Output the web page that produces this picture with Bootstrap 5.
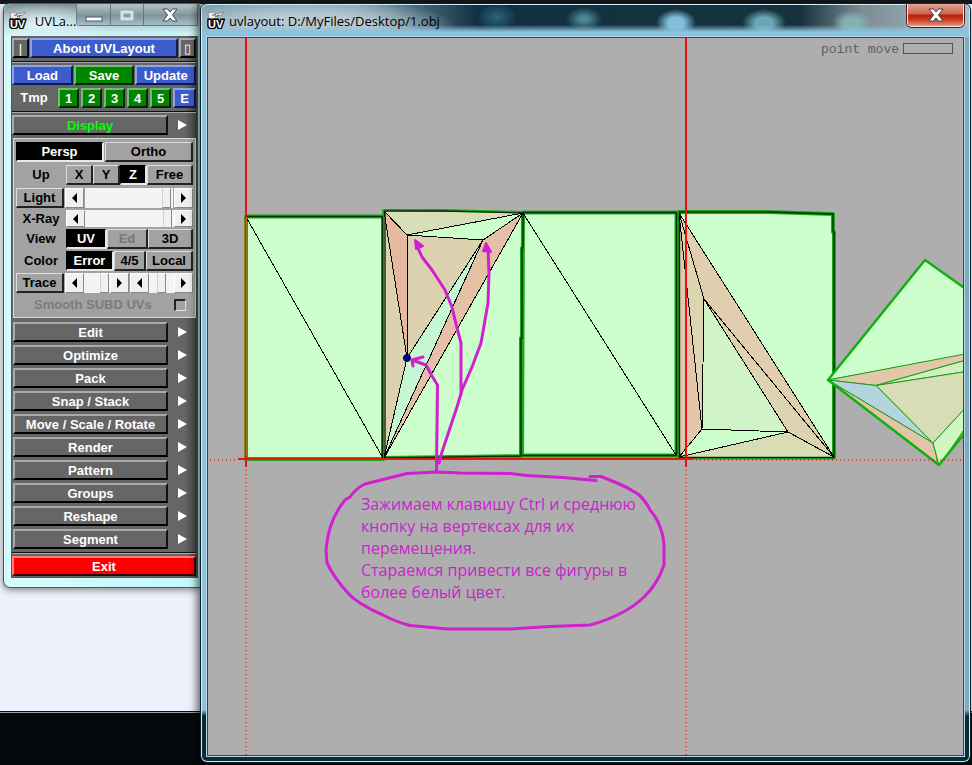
<!DOCTYPE html>
<html lang="ru">
<head>
<meta charset="utf-8">
<meta name="viewport" content="width=device-width, initial-scale=1">
<title>uvlayout: D:/MyFiles/Desktop/1.obj</title>
<link href="https://cdn.jsdelivr.net/npm/bootstrap@5.3.0/dist/css/bootstrap.min.css" rel="stylesheet">
<style>
body{font-family:"Liberation Sans",Arial,sans-serif;font-size:13px;line-height:16px}
.desktop{padding:3px 1px 2px 3px;background:linear-gradient(#151b1d 0 4px,#eef1fb 4px calc(100% - 54px),#0a0d0f calc(100% - 54px) calc(100% - 53px),#9a9fa3 calc(100% - 53px) calc(100% - 52px),#04090c calc(100% - 52px))}
.win{border:1px solid #445c62;border-radius:7px}
.win-title{font-family:"Open Sans","Noto Sans",sans-serif;font-size:13px;line-height:20px;color:#000}
/* tools window */
.tools{width:197px;border-radius:7px 0 0 7px;border-right:0;padding:0 2px 9px 7px;background:linear-gradient(90deg,#bdf6f6,#d6fcfd 4px,#c2f8fa 100%);box-shadow:inset 1px 1px 0 #e9ffff,0 2px 7px #0007}
.tools .win-title{height:32px;padding-top:7px;margin:0 -2px 0 -7px;padding-left:5px;border-radius:7px 0 0 0;background:radial-gradient(ellipse 60px 20px at 40px 20px,#e2f5f8,#e2f5f800),linear-gradient(#7f9297,#a5bdc4 50%,#c9f3f7 92%)}
.caps{height:22px;margin:-7px 2px 0 0;border:1px solid #667c83;border-top:0;border-radius:0 0 0 4px;overflow:hidden}
.caps button{width:33px;border:0;border-right:1px solid #66797f;background:linear-gradient(#b4c3c8,#8b9ca2 48%,#7d9299 52%,#a5bfc6);padding:0}
.caps button:first-child{width:34px}.caps button:last-child{width:54px;border-right:0}
.tool-body{background:linear-gradient(90deg,#666 93%,#454545);border:1px solid #555;border-width:0 1px 1px;padding:2px 1px 1px 0}
.bv{height:20px;padding:0;border:2px solid;border-color:#aaa #111 #000 #aaa;background:#666;color:#fff;font-weight:700;line-height:15px;text-align:center;white-space:nowrap;flex:none}
.blue{background:#3d5ccb;border-color:#8ea2e8 #0d1a55 #0d1a55 #8ea2e8}
.green{background:#008500;border-color:#73bd73 #002a00 #002a00 #73bd73}
.red{background:#f00;border-color:#ff7d7d #300 #300 #ff7d7d}
.rule{height:2px;background:#111;border-bottom:1px solid #aaa;margin:3px 0 2px}
.g3{gap:3px}.g1{gap:1px}.g2{gap:2px}
.w16{width:17px}.w21{width:21px}.w27{width:27px}.w32{width:32px}.w41{width:41px}.w48{width:48px}
.lab{width:44px;font-weight:700;color:#fff;text-align:center;flex:none}
.grow{flex:1 1 0;min-width:0}
.tri{width:28px;height:20px;border:0;background:none;padding:0;line-height:0;flex:none}
.sub{background:#a2a2a2;border:1px solid #dadada;margin:3px 0 4px 1px;padding:3px 2px 3px 2px;color:#000}
.sub .lab{width:50px;color:#000}
.sub .bv{background:#a2a2a2;color:#000;border-width:1px 2px 2px 1px;border-color:#ddd #222 #222 #ddd;line-height:16px}
.sub .bv.on{background:#000;color:#fff;border-color:#000 #e8e8e8 #e8e8e8 #000}
.sub .bv.off{color:#777}
.sub .arr{width:19px;height:20px;flex:none;padding:0;background:#f0f0f0;border:1px solid;border-color:#fff #888 #888 #fff;line-height:0}
.sub .short .arr,.short .sl{height:17px}
.sl{-webkit-appearance:none;appearance:none;height:20px;margin:0;min-width:0;background:#f4f4f4;flex:1 1 0;overflow:hidden}
.sl::-webkit-slider-thumb{-webkit-appearance:none;width:9px;height:20px;background:#f0f0f0;border:1px solid;border-color:#fff #888 #888 #d0d0d0}
.chk{-webkit-appearance:none;appearance:none;width:12px;height:12px;margin:0;border:2px solid;border-color:#222 #ddd #ddd #222;border-width:2px 1px 1px 2px}
.dim{color:#7b7b7b;font-weight:700}
.disp{color:#0f0}
.row-up{margin-top:3px}.row-2{margin-top:2px}.ms-px{margin-left:1px}
.smooth{height:19px;margin-top:2px;padding:0 7px 0 18px}
.menu-list{padding-left:1px}
/* drawing window */
.view{border-color:#0d2028;background:
 linear-gradient(#0000 calc(100% - 52px),#0e2a36 calc(100% - 46px)),
 linear-gradient(90deg,#8cc3de,#85b6cf 60%,#7cabc2);
 box-shadow:inset 0 0 0 1px #d2edf5,-3px 0 9px #0009;padding:0 6px 6px}
.view>.win-title{height:32px;margin:1px -5px 0;padding:6px 0 0 5px;border-radius:6px 6px 0 0;background:
 linear-gradient(#0000 62%,#8cc2dd 84%),
 radial-gradient(ellipse 150px 26px at 105px 20px,#b9c9d1 40%,#b9c9d100),
 radial-gradient(ellipse 20px 14px at 295px 12px,#2a6480,#2a648000),
 radial-gradient(ellipse 18px 12px at 382px 14px,#4c8795 20%,#4c879500),
 radial-gradient(ellipse 20px 14px at 474px 18px,#7fc0db 40%,#7fc0db00),
 radial-gradient(ellipse 22px 14px at 562px 18px,#66a6b5 40%,#66a6b500),
 radial-gradient(ellipse 20px 13px at 650px 18px,#82b0b0 40%,#82b0b000),
 linear-gradient(90deg,#7ba0b0 20%,#123041 36%,#16323e 78%,#7d8b93 86%,#a3c2cf)}
.x-red{width:57px;height:23px;margin:-7px 5px 0 0;padding:0;border:1px solid #fbe4df;border-top:0;border-radius:0 0 5px 5px;background:linear-gradient(#e3a194,#cf6650 45%,#b4220b 50%,#c63a20 70%,#e8967c);box-shadow:0 0 0 1px #4b1f1c;line-height:0}
.canvas-area{background:#aeaeae;border:1px solid #33474f;box-shadow:0 0 0 1px #b9d7e2;min-height:600px}
.scene{position:absolute;inset:0;width:100%;height:100%}
.status{position:relative;padding:5px 10px 0 0;font:13px/14px "Liberation Mono",monospace;color:#606060}
.meter{width:50px;height:11px;border:1px solid #555}
.note{position:absolute;left:153px;top:455px;width:290px;font:16px/22px "Open Sans","Noto Sans",sans-serif;color:#d020d0}
</style>
<script src="https://cdn.jsdelivr.net/npm/bootstrap@5.3.0/dist/js/bootstrap.bundle.min.js"></script>
</head>
<body>
<svg class="d-none" aria-hidden="true">
 <symbol id="r" viewBox="0 0 9 10"><path d="M0 0L9 5L0 10z" fill="#fff"/></symbol>
 <symbol id="rb" viewBox="0 0 5 10"><path d="M0 0L5 5L0 10z"/></symbol>
 <symbol id="lb" viewBox="0 0 5 10"><path d="M5 0L0 5L5 10z"/></symbol>
 <symbol id="uv" viewBox="0 0 18 18"><path d="M1 2l5-1 2 2 5-1 4-1-3 3-4 1 1 3H2z" fill="#eee" stroke="#777" stroke-width=".7"/><path d="M5 4h4M8 6l4-2" stroke="#555"/><text x="1" y="17" font-family="Liberation Sans" font-weight="700" font-size="11" fill="#fff" stroke="#000" stroke-width="3" paint-order="stroke">UV</text></symbol>
 <symbol id="x" viewBox="0 0 16 14"><path d="M1 1h4.500L8 4l2.500-3H15l-4.500 6L15 13h-4.500L8 10l-2.500 3H1l4.500-6z" fill="#fff" stroke="#445" stroke-width="1"/></symbol>
</svg>
<div class="desktop min-vh-100 d-flex">
 <section class="win tools align-self-start flex-shrink-0">
  <header class="win-title d-flex">
   <svg width="18" height="18" aria-hidden="true"><use href="#uv"/></svg>
   <span class="ps-2 flex-grow-1">UVLa...</span>
   <div class="caps d-flex">
    <button aria-label="Minimize"><svg class="d-block mx-auto" width="18" height="18"><rect x="1" y="11" width="16" height="4" fill="#fff" stroke="#556"/></svg></button>
    <button aria-label="Maximize"><svg class="d-block mx-auto" width="18" height="18"><path d="M2 4h14v11H2zM6 8h6v3H6z" fill="#d5e0e3" fill-rule="evenodd" stroke="#8fa3a9"/></svg></button>
    <button aria-label="Close"><svg class="d-block mx-auto" width="16" height="14"><use href="#x"/></svg></button>
   </div>
  </header>
  <div class="tool-body">
   <div class="d-flex g1"><button class="bv w16 fw-normal">|</button><button class="bv blue grow">About UVLayout</button><button class="bv w16 fw-normal">▯</button></div>
   <div class="rule"></div>
   <div class="d-flex g1"><button class="bv blue grow">Load</button><button class="bv green grow">Save</button><button class="bv blue grow">Update</button></div>
   <div class="d-flex g2 row-up align-items-center"><span class="lab">Tmp</span><button class="bv green w21">1</button><button class="bv green w21">2</button><button class="bv green w21">3</button><button class="bv green w21">4</button><button class="bv green w21">5</button><button class="bv blue grow">E</button></div>
   <div class="rule"></div>
   <div class="d-flex"><button class="bv grow disp">Display</button><button class="tri" aria-label="Display menu"><svg width="9" height="10"><use href="#r"/></svg></button></div>
   <div class="sub">
    <div class="d-flex g1"><button class="bv on grow">Persp</button><button class="bv grow">Ortho</button></div>
    <div class="d-flex align-items-center row-up"><span class="lab">Up</span><button class="bv w27">X</button><button class="bv w27">Y</button><button class="bv on w27">Z</button><button class="bv grow">Free</button></div>
    <div class="d-flex g1 row-up"><button class="bv w48">Light</button><button class="arr" aria-label="Less light"><svg width="5" height="10"><use href="#lb"/></svg></button><input class="sl" type="range" aria-label="Light" value="98"><button class="arr" aria-label="More light"><svg width="5" height="10"><use href="#rb"/></svg></button></div>
    <div class="d-flex short row-2 align-items-center"><label class="lab" for="xr">X-Ray</label><button class="arr" aria-label="Less X-Ray"><svg width="5" height="10"><use href="#lb"/></svg></button><input class="sl" id="xr" type="range" value="98"><button class="arr" aria-label="More X-Ray"><svg width="5" height="10"><use href="#rb"/></svg></button></div>
    <div class="d-flex align-items-center row-2"><span class="lab">View</span><button class="bv on w41">UV</button><button class="bv off w41" disabled>Ed</button><button class="bv grow">3D</button></div>
    <div class="d-flex align-items-center row-2"><span class="lab">Color</span><button class="bv on w48">Error</button><button class="bv w32">4/5</button><button class="bv grow">Local</button></div>
    <div class="d-flex row-2"><button class="bv w48">Trace</button><button class="arr ms-px" aria-label="Trace A back"><svg width="5" height="10"><use href="#lb"/></svg></button><input class="sl" type="range" aria-label="Trace A" value="95"><button class="arr" aria-label="Trace A forward"><svg width="5" height="10"><use href="#rb"/></svg></button><button class="arr ms-px" aria-label="Trace B back"><svg width="5" height="10"><use href="#lb"/></svg></button><input class="sl" type="range" aria-label="Trace B" value="50"><button class="arr" aria-label="Trace B forward"><svg width="5" height="10"><use href="#rb"/></svg></button></div>
    <div class="d-flex align-items-center justify-content-between smooth"><label class="dim" for="sm">Smooth SUBD UVs</label><input class="chk" id="sm" type="checkbox" disabled></div>
   </div>
   <nav class="d-flex flex-column g3 menu-list">
    <div class="d-flex"><button class="bv grow">Edit</button><button class="tri" aria-label="Edit menu"><svg width="9" height="10"><use href="#r"/></svg></button></div>
    <div class="d-flex"><button class="bv grow">Optimize</button><button class="tri" aria-label="Optimize menu"><svg width="9" height="10"><use href="#r"/></svg></button></div>
    <div class="d-flex"><button class="bv grow">Pack</button><button class="tri" aria-label="Pack menu"><svg width="9" height="10"><use href="#r"/></svg></button></div>
    <div class="d-flex"><button class="bv grow">Snap / Stack</button><button class="tri" aria-label="Snap menu"><svg width="9" height="10"><use href="#r"/></svg></button></div>
    <div class="d-flex"><button class="bv grow">Move / Scale / Rotate</button><button class="tri" aria-label="Move menu"><svg width="9" height="10"><use href="#r"/></svg></button></div>
    <div class="d-flex"><button class="bv grow">Render</button><button class="tri" aria-label="Render menu"><svg width="9" height="10"><use href="#r"/></svg></button></div>
    <div class="d-flex"><button class="bv grow">Pattern</button><button class="tri" aria-label="Pattern menu"><svg width="9" height="10"><use href="#r"/></svg></button></div>
    <div class="d-flex"><button class="bv grow">Groups</button><button class="tri" aria-label="Groups menu"><svg width="9" height="10"><use href="#r"/></svg></button></div>
    <div class="d-flex"><button class="bv grow">Reshape</button><button class="tri" aria-label="Reshape menu"><svg width="9" height="10"><use href="#r"/></svg></button></div>
    <div class="d-flex"><button class="bv grow">Segment</button><button class="tri" aria-label="Segment menu"><svg width="9" height="10"><use href="#r"/></svg></button></div>
   </nav>
   <div class="rule"></div>
   <button class="bv red w-100 d-block">Exit</button>
  </div>
 </section>
 <main class="win view flex-grow-1 d-flex flex-column">
  <header class="win-title d-flex">
   <svg width="18" height="18" aria-hidden="true"><use href="#uv"/></svg>
   <span class="ps-1 flex-grow-1">uvlayout: D:/MyFiles/Desktop/1.obj</span>
   <button class="x-red" aria-label="Close"><svg width="16" height="14"><use href="#x"/></svg></button>
  </header>
  <div class="canvas-area position-relative flex-grow-1 overflow-hidden">
   <svg class="scene" role="img" aria-label="UV shells">
    <g transform="translate(-208 -38)" stroke-linejoin="round">
     <g fill="#cfc" stroke="#18a818" stroke-width="4">
      <path d="M246 216.500H383V459H246z"/><path d="M384 211h59l80 2v35l-1 0v90l-1 0V456l-137 2z"/><path d="M523 212.500H676.500V455.500H522z"/><path d="M679 212l89 0 65 2v18l1 0V457.500H679z"/>
     </g>
     <g stroke="none">
      <path fill="#d8dfb8" d="M384 211L523 213L407 235z"/><path fill="#cfc" d="M407 235L523 213L483 240z"/><path fill="#e5b8a0" d="M384 211L407 235V358z"/><path fill="#dcd2b0" d="M384 211L407 358L384 458zM407 235L483 240L407 358z"/><path fill="#c5f7d3" d="M483 240L407 358L384 458z"/><path fill="#e4c0a6" d="M483 240L523 213L384 458z"/>
      <path fill="#e4c6aa" d="M679 213L702 429L679 457z"/><path fill="#ddd5b2" d="M679 213L704 299L702 429z"/><path fill="#e0ceaf" d="M679 213L834 457L704 299z"/><path fill="#ddd3b0" d="M704 299L834 457L788 432z"/><path fill="#d0f4c8" d="M704 299L788 432L702 429z"/><path fill="#dadcb6" d="M788 432L834 457H679z"/>
     </g>
     <path fill="none" stroke="#042e04" stroke-width="1.400" d="M247 216.500H382.500V458M385 458V211h59l79 2v35l-1 0v90l-1 0V456l-137 2M523 212.500H676.500V455.500H522M679.500 457V212h89l64.500 2v18l1 0V457.500H679"/>
     <path fill="none" stroke="#000" stroke-width="1" shape-rendering="crispEdges" d="M246 217L383 458M384 211L407 235L523 213L483 240L407 235V358L384 211M407 358L483 240L384 458L407 358M384 458L523 213M523 213L676 455M679 213L702 429L679 457M702 429L704 299L788 432L702 429M679 457L788 432L834 457L679 213L704 299L834 457"/>
     <g stroke="#1a9c1a" stroke-width="1">
      <path fill="#cfc" d="M828 380L925 260L970 292V354z"/><path fill="#e2c8ab" d="M828 380L970 353V359L876 385.500z"/><path fill="#d0f0c0" d="M876 385.500L970 359V371z"/><path fill="#d9ddb5" d="M876 385.500L970 371V403L933 443z"/><path fill="#b4d5dd" d="M828 380L876 385.500L933 443z"/><path fill="#e2c5a8" d="M828 380L933 443L939 465z"/><path fill="#cdf8c2" d="M933 443L970 403V427L939 465z"/><path fill="#a99b4c" d="M948 453L970 421V427z"/>
      <path fill="none" stroke="#10b010" stroke-width="2.500" d="M970 292L925 260L828 380L939 465L970 427"/>
     </g>
     <path d="M245.500 218V458" stroke="#927619" stroke-width="3"/>
     <path d="M245.500 218V458" stroke="#c03c10" stroke-width="1"/>
     <g fill="#e81412"><rect x="245" y="38" width="2" height="180"/><rect x="245" y="456" width="2" height="11"/><rect x="685" y="38" width="2" height="429"/><rect x="238" y="458" width="456" height="2"/></g>
     <path d="M246 470V756M686 470V756M210 460H238M696 460H963" stroke="#e00808" stroke-width="2" stroke-dasharray="1 3" opacity=".6"/>
     <circle cx="407" cy="358" r="3.500" fill="#00a" stroke="#002"/>
     <g fill="none" stroke="#d020d0" stroke-width="3" stroke-linecap="round">
      <path d="M590 476.500h11l16 6.500q10 4 21 11 8 7 12 16 7 8 10 17 4 10 4 20v18l-4 10q-6 12-15 21-9 9-20 15-16 9-35 14l-40 1.500-40 2.500h-62l-38-3.500q-15-4-27-10.500-12-5-23-12-8-5-13-11-12-13-20-29l-1-13q1-12 4-22 5-16 15-28l5-3q6-9 15-13l42-10.500 30-1.500 23 1 50 .5 17 2 36 2 33 3"/>
      <path d="M436.500 471L437.500 385L432 376L426 365L412 360M423 357L412 360L413 366"/>
      <path d="M439 463L442 452L452 422L457 407L462 390L472 367L481 343L488 303L489 273L488 248M461 395V343L457 328L452 307L445 290L432 270L422 257L417 246"/>
      <path fill="#d020d0" stroke-width="2" d="M486 243L483 251L491 252zM415 240L423 246L416 249z"/>
     </g>
    </g>
   </svg>
   <div class="status d-flex justify-content-end gap-1"><span>point move</span><span class="meter"></span></div>
   <p class="note m-0">Зажимаем клавишу Ctrl и среднюю<br>кнопку на вертексах для их<br>перемещения.<br>Стараемся привести все фигуры в<br>более белый цвет.</p>
  </div>
 </main>
</div>
</body>
</html>
